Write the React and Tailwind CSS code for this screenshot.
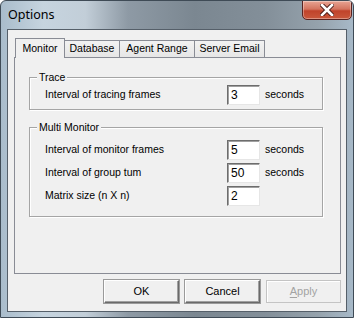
import React from 'react';

const tabs = [
  { label: 'Monitor', width: 'w-[50px]', active: true },
  { label: 'Database', width: 'w-[56px]' },
  { label: 'Agent Range', width: 'w-[76px]' },
  { label: 'Server Email', width: 'w-[71px]' },
];

const NumberBox = ({ value }) => (
  <div className="w-[33px] h-[20px] border border-t-[#6d6d6d] border-l-[#6d6d6d] border-r-[#e6e6e6] border-b-[#e6e6e6] bg-white shadow-[inset_1px_1px_0_#a0a0a0] pl-[3px] text-[12px] leading-[18px] text-black">
    {value}
  </div>
);

const Row = ({ label, value, unit }) => (
  <div className="flex items-center h-[20px]">
    <span className="w-[182px]">{label}</span>
    <NumberBox value={value} />
    {unit && <span className="ml-[5px]">{unit}</span>}
  </div>
);

const GroupBox = ({ title, className, children }) => (
  <div
    className={`relative w-[294px] ml-[14px] border border-[#a5a5a5] shadow-[inset_1px_1px_0_#ffffff,1px_1px_0_#ffffff] ${className}`}
  >
    {/* caption sits over the frame line */}
    <span className="absolute -top-[8px] left-[7px] px-[2px] bg-[#f0f0f0] leading-[14px]">{title}</span>
    {children}
  </div>
);

const Button = ({ children, disabled }) => (
  <button
    className={`w-[75px] h-[23px] border bg-[#f0f0f0] text-[11px] ${
      disabled
        ? 'border-[#c4c4c4] text-[#a3a3a3] shadow-[inset_1px_1px_0_#ffffff]'
        : 'border-t-[#ffffff] border-l-[#ffffff] border-r-[#6a6a6a] border-b-[#6a6a6a] shadow-[inset_-1px_-1px_0_#a0a0a0,0_0_0_1px_#9a9a9a] text-black'
    }`}
  >
    {children}
  </button>
);

const App = () => {
  return (
    <div className="w-[354px] h-[318px] flex flex-col rounded-t-[6px] border border-[#3f4b56] bg-[linear-gradient(90deg,#a9bccb_0%,#c6d4df_12%,#c2ced8_24%,#8e9aa5_36%,#7b8791_55%,#838f99_75%,#95a2ac_90%,#a7b9c8_100%)] font-['Liberation_Sans',Arial,sans-serif] text-[10.5px] text-black overflow-hidden">
      {/* Title bar */}
      <div className="h-[28px] flex justify-between items-start">
        <span className="pl-[7px] pt-[6px] text-[12.5px] leading-[16px] font-['Noto_Sans',sans-serif] text-black">
          Options
        </span>
        <div className="w-[50px] h-[20px] mr-[1px] -mt-[1px] rounded-b-[5px] border border-[#5a2320] bg-[linear-gradient(180deg,#e8a493_0%,#d4745f_45%,#c0432b_55%,#c9583c_100%)] shadow-[inset_0_0_0_1px_rgba(255,255,255,0.35)] flex items-center justify-center">
          <svg width="14" height="12" viewBox="0 0 14 12">
            <path d="M2 1 L12 11 M12 1 L2 11" stroke="#4a1c18" strokeWidth="4.5" strokeLinecap="square" />
            <path d="M2 1 L12 11 M12 1 L2 11" stroke="#ffffff" strokeWidth="2.6" strokeLinecap="square" />
          </svg>
        </div>
      </div>

      {/* Client area */}
      <div className="flex-1 mx-[6px] mb-[5px] border border-[#555f69] bg-[#f0f0f0] flex flex-col pl-[6px] pr-[5px]">
        {/* Tabs */}
        <div className="flex items-end mt-[8px] h-[19px]">
          {tabs.map((t) =>
            t.active ? (
              <div
                key={t.label}
                className={`${t.width} relative z-10 h-[20px] -mb-[1px] ml-[1px] border border-b-0 border-[#898c95] bg-[#f0f0f0] flex items-start justify-center pt-[2px]`}
              >
                {t.label}
              </div>
            ) : (
              <div
                key={t.label}
                className={`${t.width} h-[17px] -ml-[1px] border border-b-0 border-[#898c95] bg-[linear-gradient(180deg,#f2f2f2,#e6e6e6)] flex items-center justify-center`}
              >
                {t.label}
              </div>
            )
          )}
        </div>

        {/* Tab panel */}
        <div className="h-[217px] border border-[#898c95] bg-[#f0f0f0] pt-[19px]">
          <GroupBox title="Trace" className="h-[33px] pt-[7px] pl-[15px]">
            <Row label="Interval of tracing frames" value="3" unit="seconds" />
          </GroupBox>

          <GroupBox title="Multi Monitor" className="mt-[17px] h-[90px] pt-[12px] pl-[15px] flex flex-col gap-[3px]">
            <Row label="Interval of monitor frames" value="5" unit="seconds" />
            <Row label="Interval of group tum" value="50" unit="seconds" />
            <Row label="Matrix size (n X n)" value="2" />
          </GroupBox>
        </div>

        {/* Dialog buttons */}
        <div className="flex justify-end gap-[6px] mt-[6px]">
          <Button>OK</Button>
          <Button>Cancel</Button>
          <Button disabled>
            <span className="underline underline-offset-2">A</span>pply
          </Button>
        </div>
      </div>
    </div>
  );
};

export default App;
